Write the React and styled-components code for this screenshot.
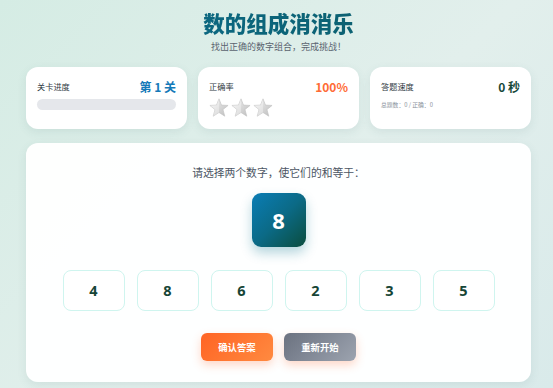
import styled, { createGlobalStyle } from "styled-components";

const GlobalStyle = createGlobalStyle`
  * { box-sizing: border-box; }
  body {
    margin: 0;
    min-height: 388px;
    background: linear-gradient(135deg, #d5ece4 0%, #e2efec 55%, #d9eaea 100%);
    font-family: "Noto Sans CJK SC", "Noto Sans", sans-serif;
  }
`;

const Page = styled.main`
  padding: 8px 22px 6px 26px;
  display: flex;
  flex-direction: column;
`;

const Header = styled.header`
  text-align: center;
  h1 {
    margin: 0;
    font-size: 21.5px;
    line-height: 30px;
    font-weight: 900;
    background: linear-gradient(90deg, #0a6e90, #0d5a62);
    -webkit-background-clip: text;
    background-clip: text;
    color: transparent;
  }
  p {
    margin: 3px 0 0;
    font-size: 9px;
    line-height: 12px;
    color: #5b6470;
  }
`;

const Stats = styled.section`
  margin-top: 14px;
  display: grid;
  grid-template-columns: repeat(3, 1fr);
  gap: 11px;
`;

const Card = styled.div`
  height: 62px;
  background: #fff;
  border-radius: 12px;
  padding: 11px 11px;
  box-shadow: 0 3px 10px rgba(60, 110, 110, 0.1);
`;

const CardHead = styled.div`
  height: 16px;
  display: flex;
  align-items: center;
  justify-content: space-between;
  span {
    font-size: 8.2px;
    color: #2f3a44;
  }
  strong {
    font-size: 12px;
    font-weight: 700;
    color: ${(p) => p.$color};
  }
`;

const Bar = styled.div`
  margin-top: 5px;
  height: 11px;
  border-radius: 6px;
  background: #e5e7eb;
`;

const Stars = styled.div`
  margin-top: 4px;
  display: flex;
  gap: 2px;
`;

const Sub = styled.div`
  margin-top: 6px;
  font-size: 5.8px;
  color: #8a929c;
`;

const Panel = styled.section`
  margin-top: 14px;
  background: rgba(255, 255, 255, 0.96);
  border-radius: 12px;
  box-shadow: 0 3px 10px rgba(60, 110, 110, 0.1);
  padding: 22px 0 21px;
  display: flex;
  flex-direction: column;
  align-items: center;
`;

const Prompt = styled.p`
  margin: 0;
  font-size: 10.8px;
  line-height: 14px;
  color: #4b5563;
`;

const Target = styled.div`
  margin-top: 14px;
  width: 54px;
  height: 54px;
  border-radius: 9px;
  background: linear-gradient(135deg, #0a7db5 0%, #0b6a86 50%, #0b4d3e 100%);
  box-shadow: 0 6px 12px rgba(14, 116, 144, 0.3);
  display: flex;
  align-items: center;
  justify-content: center;
  color: #fff;
  font-family: "Open Sans", "Noto Sans", sans-serif;
  font-size: 22px;
  font-weight: 700;
`;

const Numbers = styled.div`
  margin-top: 23px;
  display: flex;
  gap: 12px;
`;

const NumButton = styled.button`
  width: 62px;
  height: 41px;
  border: 1.5px solid #cff5ef;
  border-radius: 8px;
  background: #fff;
  color: #164536;
  font-family: "Open Sans", "Noto Sans", sans-serif;
  font-size: 14.5px;
  font-weight: 700;
`;

const Actions = styled.div`
  margin-top: 22px;
  display: flex;
  gap: 11px;
`;

const ActionButton = styled.button`
  width: 72px;
  height: 28px;
  border: none;
  border-radius: 6px;
  color: #fff;
  font-family: "Noto Sans CJK SC", sans-serif;
  font-size: 9.4px;
  font-weight: 700;
  background: ${(p) =>
    p.$variant === "primary"
      ? "linear-gradient(135deg, #ff6424, #ff8a40)"
      : "linear-gradient(135deg, #6b7280, #9ca3af)"};
  box-shadow: 0 4px 10px rgba(255, 107, 53, 0.28);
`;

const Star = () => (
  <svg width="20" height="19" viewBox="0 0 24 23">
    <defs>
      <linearGradient id="sg" x1="0" y1="0" x2="1" y2="1">
        <stop offset="0" stopColor="#f4f4f4" />
        <stop offset="1" stopColor="#bdbdbd" />
      </linearGradient>
    </defs>
    <polygon
      points="12,1 15,8.6 23,9 16.8,14 19,22 12,17.5 5,22 7.2,14 1,9 9,8.6"
      fill="url(#sg)"
      stroke="#c4c4c4"
      strokeWidth="0.8"
      strokeLinejoin="round"
    />
    <polygon points="12,1 12,17.5 5,22 7.2,14 1,9 9,8.6" fill="#ffffff" opacity="0.35" />
  </svg>
);

export default function App() {
  return (
    <>
      <GlobalStyle />
      <Page>
        <Header>
          <h1>数的组成消消乐</h1>
          <p>找出正确的数字组合，完成挑战！</p>
        </Header>
        <Stats>
          <Card>
            <CardHead $color="#1479b8">
              <span>关卡进度</span>
              <strong>第 1 关</strong>
            </CardHead>
            <Bar />
          </Card>
          <Card>
            <CardHead $color="#ff6b35">
              <span>正确率</span>
              <strong>100%</strong>
            </CardHead>
            <Stars>
              <Star />
              <Star />
              <Star />
            </Stars>
          </Card>
          <Card>
            <CardHead $color="#17483a">
              <span>答题速度</span>
              <strong>0 秒</strong>
            </CardHead>
            <Sub>总题数：0 / 正确：0</Sub>
          </Card>
        </Stats>
        <Panel>
          <Prompt>请选择两个数字，使它们的和等于：</Prompt>
          <Target>8</Target>
          <Numbers>
            {[4, 8, 6, 2, 3, 5].map((n, i) => (
              <NumButton key={i}>{n}</NumButton>
            ))}
          </Numbers>
          <Actions>
            <ActionButton $variant="primary">确认答案</ActionButton>
            <ActionButton>重新开始</ActionButton>
          </Actions>
        </Panel>
      </Page>
    </>
  );
}
